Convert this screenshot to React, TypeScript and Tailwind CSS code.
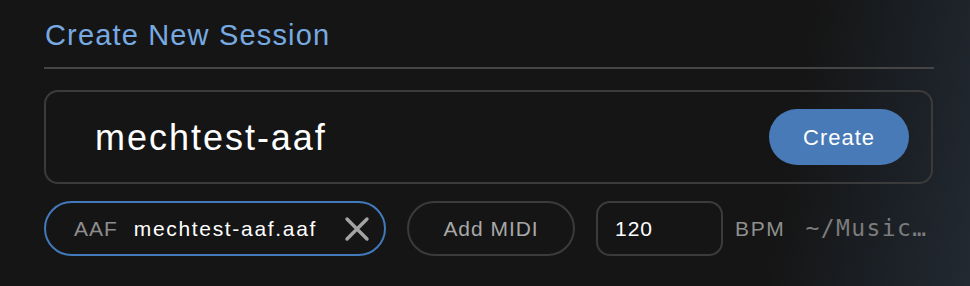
import React from "react";

const App = () => {
  return (
    <div className="w-[970px] h-[286px] overflow-hidden bg-[linear-gradient(100deg,#151515_0%,#151515_80%,#1c2127_92%,#222931_100%)] px-[44px] pt-[17px] font-['Liberation_Sans',Arial,sans-serif] tracking-[0.06em]">
      {/* Heading */}
      <h2 className="pl-[1px] text-[29px] leading-[36px] tracking-[0.04em] text-[#78aae2]">Create New Session</h2>
      <div className="mt-[14px] h-[2px] w-[890px] bg-[#454545]" />

      {/* Session name */}
      <div className="mt-[21px] flex h-[94px] w-[889px] items-center rounded-[14px] border-2 border-[#3b3b3b] pl-[49px] pr-[22px]">
        <span className="mt-[2px] text-[36px] tracking-[0.055em] text-white">mechtest-aaf</span>
        <button className="ml-auto h-[56px] w-[140px] rounded-full bg-[#477ab7] text-[22px] tracking-[0.045em] text-white">
          Create
        </button>
      </div>

      {/* Options row */}
      <div className="mt-[17px] flex h-[55px] w-[900px] items-center">
        <div className="flex h-[55px] w-[342px] shrink-0 items-center rounded-full border-2 border-[#4279ba] pl-[28px] pr-[14px]">
          <span className="text-[21px] text-[#8d8d8d]">AAF</span>
          <span className="ml-[16px] text-[21px] tracking-[0.08em] text-white">mechtest-aaf.aaf</span>
          <svg className="ml-auto" width="26" height="26" viewBox="0 0 26 26">
            <path d="M3 3L23 23M23 3L3 23" stroke="#a3a3a3" strokeWidth="3.4" strokeLinecap="round" />
          </svg>
        </div>
        <button className="ml-[21px] h-[55px] w-[168px] shrink-0 rounded-full border-2 border-[#3b3b3b] text-[21px] text-[#a8a8a8]">
          Add MIDI
        </button>
        <div className="ml-[21px] flex h-[55px] w-[127px] shrink-0 items-center rounded-[14px] border-2 border-[#3b3b3b] pl-[17px]">
          <span className="text-[21px] text-white">120</span>
        </div>
        <span className="ml-[12px] shrink-0 text-[21px] tracking-[0.08em] text-[#8f8f8f]">BPM</span>
        <span className="ml-[20px] shrink-0 font-['DejaVu_Sans_Mono',monospace] text-[23px] tracking-[0.06em] text-[#7c7c7c]">~/Music…</span>
      </div>
    </div>
  );
};

export default App;
